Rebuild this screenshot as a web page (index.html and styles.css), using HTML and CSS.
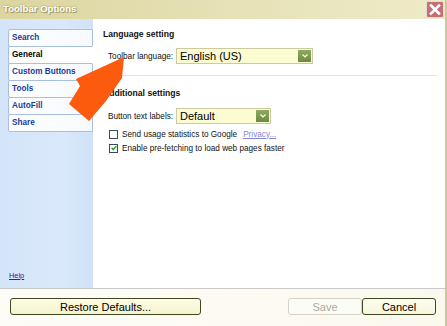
FILE: index.html
```html
<!DOCTYPE html>
<html lang="en">

<head>
    <meta charset="UTF-8">
    <meta name="viewport" content="width=device-width, initial-scale=1.0">
    <title>Toolbar Options</title>
    <link rel="stylesheet" href="styles.css">
</head>

<body>
    <div class="window">
        <div class="titlebar">
            <span class="title">Toolbar Options</span>
            <span class="close">
                <svg width="16" height="15" viewBox="0 0 16 15">
                    <path d="M4 3.5 L12 11.5 M12 3.5 L4 11.5" stroke="#fff" stroke-width="2.6" stroke-linecap="square" />
                </svg>
            </span>
        </div>

        <div class="main">
            <div class="sidebar">
                <div class="tabs">
                    <div class="tab">Search</div>
                    <div class="tab selected">General</div>
                    <div class="tab">Custom Buttons</div>
                    <div class="tab">Tools</div>
                    <div class="tab">AutoFill</div>
                    <div class="tab">Share</div>
                </div>
                <a class="help" href="#">Help</a>
            </div>

            <div class="panel">
                <div class="heading first">Language setting</div>
                <div class="row lang-row">
                    <span class="label">Toolbar language:</span>
                    <div class="select wide">
                        <span class="value">English (US)</span>
                        <span class="drop"><svg width="6" height="4" viewBox="0 0 6 4"><path d="M0.5 0.5 L3 3 L5.5 0.5" fill="none" stroke="#fff" stroke-width="1.2" /></svg></span>
                    </div>
                </div>

                <div class="divider"></div>

                <div class="heading">Additional settings</div>
                <div class="row labels-row">
                    <span class="label">Button text labels:</span>
                    <div class="select narrow">
                        <span class="value">Default</span>
                        <span class="drop"><svg width="6" height="4" viewBox="0 0 6 4"><path d="M0.5 0.5 L3 3 L5.5 0.5" fill="none" stroke="#fff" stroke-width="1.2" /></svg></span>
                    </div>
                </div>
                <div class="check-row first-check">
                    <span class="box"></span>
                    <span>Send usage statistics to Google</span>
                    <a class="privacy" href="#">Privacy...</a>
                </div>
                <div class="check-row">
                    <span class="box">
                        <svg width="6" height="6" viewBox="0 0 6 6"><path d="M0.6 2.8 L2.3 4.6 L5.4 0.9" fill="none" stroke="#21a121" stroke-width="1.4" /></svg>
                    </span>
                    <span>Enable pre-fetching to load web pages faster</span>
                </div>
            </div>
        </div>

        <div class="footer">
            <button class="btn restore">Restore Defaults...</button>
            <div class="right-btns">
                <button class="btn save" disabled>Save</button>
                <button class="btn cancel">Cancel</button>
            </div>
        </div>

        <!-- big orange pointer drawn on top of the dialog -->
        <svg class="arrow" width="447" height="326" viewBox="0 0 447 326">
            <polygon points="124,57 122,78 106,101 89,121 69,104 80,86 76,79" fill="#fc5a0c" />
        </svg>
    </div>
</body>

</html>
```

FILE: styles.css
```css
body {
    margin: 0;
    font-family: "Liberation Sans", Arial, sans-serif;
}

.window {
    position: relative;
    width: 445px;
    height: 326px;
    border-right: 2px solid #c9c6a0;
    display: flex;
    flex-direction: column;
    overflow: hidden;
}

.titlebar {
    height: 19px;
    display: flex;
    align-items: flex-start;
    justify-content: space-between;
    background: linear-gradient(to right, #dcd5a0, #e6e1b6 50%, #eeebc8);
}

.title {
    color: #fff;
    font-weight: bold;
    font-size: 9.6px;
    line-height: 17px;
    padding-left: 3px;
    text-shadow: 0 0 2px #968d52, 1px 1px 0 #aaa26a;
}

.close {
    width: 16px;
    height: 15px;
    margin-top: 1px;
    margin-right: 1px;
    background: #c46f79;
    border: 1px solid #eadccc;
    border-radius: 2px;
    display: flex;
}

.main {
    display: flex;
    height: 269px;
}

.sidebar {
    width: 93px;
    background: linear-gradient(to right, #d5e5f9, #d9e8fa 70%, #d0e2f8);
    display: flex;
    flex-direction: column;
    justify-content: space-between;
}

.tabs {
    margin-top: 10px;
    margin-left: 8px;
}

.tab {
    height: 16px;
    line-height: 16px;
    margin-top: -1px;
    padding-left: 3px;
    border: 1px solid #a9bfe1;
    border-radius: 2px 0 0 2px;
    background: linear-gradient(to right, #fff, #f6f9fe);
    color: #1b3b9c;
    font-weight: bold;
    font-size: 8.2px;
}

.tab:first-child {
    margin-top: 0;
}

.tab.selected {
    color: #000;
    background: #fff;
    border-right-color: #fff;
    position: relative;
}

.help {
    font-size: 7.4px;
    color: #1a27a8;
    margin: 0 0 8px 9px;
}

.panel {
    flex: 1;
    background: #fff;
    padding: 0 8px 0 10px;
    font-size: 8.2px;
    color: #111;
}

.heading {
    font-weight: bold;
    font-size: 8.6px;
    line-height: 11px;
    margin-top: 12px;
}

.heading.first {
    margin-top: 10px;
}

.row {
    display: flex;
    align-items: center;
    padding-left: 5px;
}

.lang-row {
    margin-top: 8px;
}

.labels-row {
    margin-top: 9px;
}

.label {
    width: 68px;
}

.select {
    height: 14px;
    border: 1px solid #cdc9a2;
    background: #fcfcd2;
    display: flex;
    align-items: center;
    justify-content: space-between;
}

.select.wide {
    width: 135px;
}

.select.narrow {
    width: 93px;
}

.value {
    font-size: 11px;
    color: #000;
    padding-left: 3px;
}

.drop {
    width: 13px;
    height: 12px;
    margin-right: 1px;
    background: linear-gradient(#8eab5d, #6c8b3e);
    display: flex;
    align-items: center;
    justify-content: center;
}

.divider {
    height: 1px;
    background: #e2e2e2;
    margin: 11px 0 0 -7px;
}

.check-row {
    display: flex;
    align-items: center;
    height: 14px;
    padding-left: 6px;
}

.first-check {
    margin-top: 3px;
}

.box {
    width: 7px;
    height: 7px;
    border: 1px solid #3b4b5b;
    background: #fff;
    margin-right: 4px;
    display: flex;
    align-items: center;
    justify-content: center;
}

.privacy {
    color: #8585d6;
    margin-left: 6px;
}

.footer {
    flex: 1;
    border-top: 1px solid #c9c9c9;
    background: linear-gradient(to right, #fdfcf7, #fbf8ee);
    display: flex;
    justify-content: space-between;
    align-items: flex-start;
    padding: 9px 9px 0 10px;
}

.right-btns {
    display: flex;
}

.btn {
    height: 17px;
    font-family: "Liberation Sans", Arial, sans-serif;
    font-size: 11px;
    color: #000;
    border: 1px solid #3f4620;
    border-radius: 3px;
    background: linear-gradient(#fdfde6, #f5f3cd);
    padding: 0;
}

.restore {
    width: 191px;
}

.save {
    width: 74px;
    color: #a9a99f;
    border-color: #d4d4c4;
    background: #fcfcf6;
}

.cancel {
    width: 74px;
    background: linear-gradient(#fdfdf0, #f7f5dc);
}

.arrow {
    position: absolute;
    left: 0;
    top: 0;
    pointer-events: none;
}
```
